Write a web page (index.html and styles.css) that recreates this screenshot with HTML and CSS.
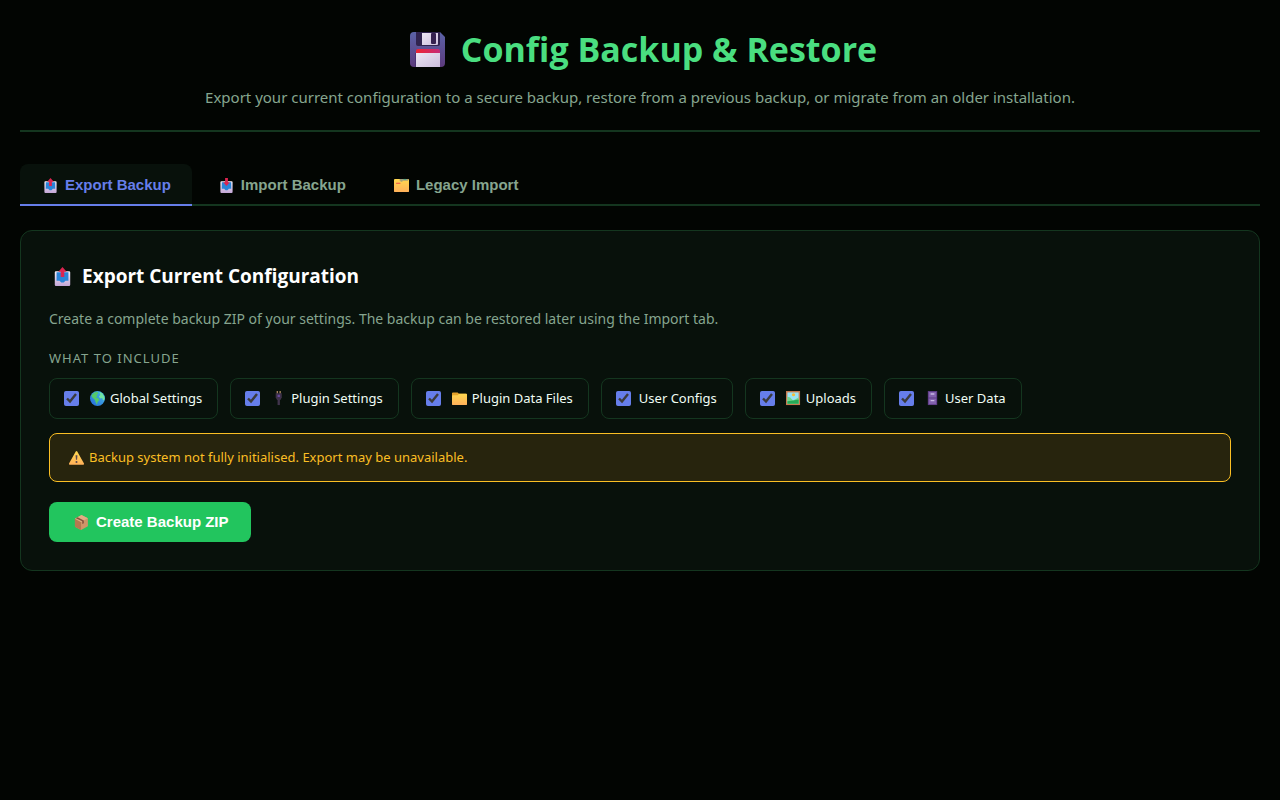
FILE: index.html
```html
<!DOCTYPE html>
<html lang="en">
<head>
  <meta charset="UTF-8">
  <meta name="viewport" content="width=device-width, initial-scale=1.0">
  <title>Config Backup &amp; Restore</title>
  <link rel="stylesheet" href="styles.css">
</head>
<body>
  <!-- Shared icons -->
  <svg class="sprite" aria-hidden="true">
    <defs>
      <linearGradient id="trayFill" x1="0" y1="0" x2="0" y2="1">
        <stop offset="0" stop-color="#f3eef8"/>
        <stop offset="1" stop-color="#c3a6d6"/>
      </linearGradient>
      <linearGradient id="floppyFill" x1="0" y1="0" x2="0" y2="1">
        <stop offset="0" stop-color="#5b63a8"/>
        <stop offset="1" stop-color="#5c3a7c"/>
      </linearGradient>
      <linearGradient id="floppyRed" x1="0" y1="0" x2="1" y2="0">
        <stop offset="0" stop-color="#ee2433"/>
        <stop offset="1" stop-color="#c52a78"/>
      </linearGradient>
      <linearGradient id="paperFill" x1="0" y1="0" x2="1" y2="1">
        <stop offset="0" stop-color="#ece6f3"/>
        <stop offset="1" stop-color="#cdbedd"/>
      </linearGradient>
      <linearGradient id="folderFill" x1="0" y1="0" x2="0" y2="1">
        <stop offset="0" stop-color="#ffd84f"/>
        <stop offset="1" stop-color="#ffb05a"/>
      </linearGradient>
      <linearGradient id="globeFill" x1="1" y1="0" x2="0" y2="1">
        <stop offset="0" stop-color="#48c0e8"/>
        <stop offset="1" stop-color="#2466d8"/>
      </linearGradient>
    </defs>
    <symbol id="tray" viewBox="0 0 16 16">
      <path d="M1.500 4.500a1 1 0 0 1 1-1h11a1 1 0 0 1 1 1V15a1 1 0 0 1-1 1h-11a1 1 0 0 1-1-1z" fill="url(#trayFill)"/>
      <path d="M3 4.500h10v7h-2.500l-1.500 1.500H7l-1.500-1.500H3z" fill="#2a84d8"/>
    </symbol>
    <symbol id="outbox" viewBox="0 0 16 16">
      <use href="#tray"/>
      <path d="M8 0l3.500 4H9.500v4.500h-3V4h-2z" fill="#dc2450"/>
    </symbol>
    <symbol id="inbox" viewBox="0 0 16 16">
      <use href="#tray"/>
      <path d="M6.500 0h3v4.500h2L8 8.500l-3.500-4h2z" fill="#dc2450"/>
    </symbol>
  </svg>

  <main class="container">
    <header class="page-header">
      <h1>
        <svg class="icon-xl" viewBox="0 0 35 35" aria-hidden="true">
          <path d="M4 0h26l5 5v26a4 4 0 0 1-4 4H4a4 4 0 0 1-4-4V4a4 4 0 0 1 4-4z" fill="url(#floppyFill)"/>
          <path d="M6 0h24v12a2 2 0 0 1-2 2H8a2 2 0 0 1-2-2z" fill="#30234f"/>
          <path d="M12 1h16v11a1 1 0 0 1-1 1H12z" fill="url(#paperFill)"/>
          <rect x="21" y="1" width="5" height="11" rx="1" fill="#35204f"/>
          <path d="M5 21h25v14H5z" fill="#4b3274"/>
          <path d="M6 21h24v14H6z" fill="url(#paperFill)"/>
          <path d="M6 21v-2a2 2 0 0 1 2-2h20a2 2 0 0 1 2 2v2z" fill="url(#floppyRed)"/>
        </svg>
        <span>Config Backup &amp; Restore</span>
      </h1>
      <p>Export your current configuration to a secure backup, restore from a previous backup, or migrate from an older installation.</p>
    </header>

    <div class="tabs" role="tablist">
      <button class="tab active" role="tab" aria-selected="true">
        <svg class="icon" aria-hidden="true"><use href="#outbox"/></svg>Export Backup
      </button>
      <button class="tab" role="tab" aria-selected="false">
        <svg class="icon" aria-hidden="true"><use href="#inbox"/></svg>Import Backup
      </button>
      <button class="tab" role="tab" aria-selected="false">
        <svg class="icon" viewBox="0 0 16 16" aria-hidden="true">
          <path d="M0 2a1 1 0 0 1 1-1h14a1 1 0 0 1 1 1v12a1 1 0 0 1-1 1H1a1 1 0 0 1-1-1z" fill="url(#folderFill)"/>
          <path d="M6 1h9v2H9v1H7V3H6z" fill="#a5a07a"/>
          <path d="M10 1h3v1h-3z" fill="#4fa98a"/>
          <rect x="2" y="5" width="5" height="1" rx="0.5" fill="#ee4b4b"/>
        </svg>Legacy Import
      </button>
    </div>

    <section class="card">
      <h2><svg class="icon-lg" aria-hidden="true"><use href="#outbox"/></svg>Export Current Configuration</h2>
      <p class="card-text">Create a complete backup ZIP of your settings. The backup can be restored later using the Import tab.</p>

      <fieldset>
        <legend>What to include</legend>
        <div class="options">
          <label class="option">
            <input type="checkbox" checked>
            <span>
              <svg class="icon" viewBox="0 0 16 16" aria-hidden="true">
                <circle cx="8" cy="8" r="8" fill="url(#globeFill)"/>
                <path d="M2.500 3.500Q5 .5 8 .8l1 2.200-2 1 1 1.500-2 1.500 2.500.5 1.500 2-2 2.500L7.500 15 6 12l-1-3-2.500-2L1.500 5z" fill="#54c96a"/>
                <path d="M10 1l3 1.500L15.300 6l.2 3-1.500 1-1-2.500-2 .5-1.500-2L11 4z" fill="#6fe6a0"/>
              </svg>Global Settings
            </span>
          </label>
          <label class="option">
            <input type="checkbox" checked>
            <span>
              <svg class="icon" viewBox="0 0 16 16" aria-hidden="true">
                <path d="M6 0h1.500v3H6zM9 0h1.500v3H9z" fill="#a5835e"/>
                <path d="M5 2.500h6.500V7L10 9.500H6.500L5 7z" fill="#3d3149"/>
                <path d="M7 4h2.500v2.500H7z" fill="#67499a"/>
                <path d="M7 9h2.500v6H7z" fill="#40344c"/>
              </svg>Plugin Settings
            </span>
          </label>
          <label class="option">
            <input type="checkbox" checked>
            <span>
              <svg class="icon" viewBox="0 0 16 16" aria-hidden="true">
                <path d="M0 2.500a1 1 0 0 1 1-1h5l1.500 1.500H15a1 1 0 0 1 1 1V9H0z" fill="#e5a32b"/>
                <path d="M0 5.500a1 1 0 0 1 1-1h5L7.500 3H15a1 1 0 0 1 1 1v10a1 1 0 0 1-1 1H1a1 1 0 0 1-1-1z" fill="url(#folderFill)"/>
              </svg>Plugin Data Files
            </span>
          </label>
          <label class="option">
            <input type="checkbox" checked>
            <span>User Configs</span>
          </label>
          <label class="option">
            <input type="checkbox" checked>
            <span>
              <svg class="icon" viewBox="0 0 16 16" aria-hidden="true">
                <path d="M0 0h15v15H0z" fill="#c77b50"/>
                <path d="M1.500 1.500h12v12h-12z" fill="#9be3f3"/>
                <circle cx="8" cy="4" r="1.700" fill="#f8bd36"/>
                <path d="M1.500 6l3 1 3 3 6-3v6.500h-12z" fill="#72d68a"/>
                <path d="M1.500 11l6-1 6-1v4.500h-12z" fill="#27a956"/>
              </svg>Uploads
            </span>
          </label>
          <label class="option">
            <input type="checkbox" checked>
            <span>
              <svg class="icon" viewBox="0 0 16 16" aria-hidden="true">
                <path d="M3 0h10v15H3z" fill="#5c3a85"/>
                <path d="M4 1h8v6H4zM4 8h8v6H4z" fill="#8261ad"/>
                <path d="M6 2.500h4V4H6zM6 9.500h4V11H6z" fill="#c9b8e4"/>
              </svg>User Data
            </span>
          </label>
        </div>
      </fieldset>

      <div class="alert" role="alert">
        <svg class="icon" viewBox="0 0 16 16" aria-hidden="true">
          <path d="M7.200 1.500a1 1 0 0 1 1.600 0l7.200 13a.8.8 0 0 1-.7 1.200H.7a.8.8 0 0 1-.7-1.200z" fill="url(#folderFill)"/>
          <path d="M7 5.500h2l-.4 5H7.400z" fill="#584650"/>
          <circle cx="8" cy="12.700" r="1.100" fill="#584650"/>
        </svg>Backup system not fully initialised. Export may be unavailable.
      </div>

      <button class="btn">
        <svg class="icon" viewBox="0 0 16 16" aria-hidden="true">
          <path d="M8 0l6.800 3.500v8.500L7.500 16 1 12.500V4z" fill="#d09468"/>
          <path d="M1 4l6.500 3.500V16L1 12.500z" fill="#b5794f"/>
          <path d="M8 0l6.800 3.500L7.500 7.500 1 4z" fill="#e0ad84"/>
          <path d="M3.800 2.500l6.700 3.300v3l-1.700.8V6.600L2 3.400z" fill="#85513c"/>
        </svg>Create Backup ZIP
      </button>
    </section>
  </main>

  <script>
    const tabs = document.querySelectorAll('.tab');

    tabs.forEach(tab => tab.addEventListener('click', () => {
      tabs.forEach(t => {
        t.classList.toggle('active', t === tab);
        t.setAttribute('aria-selected', t === tab);
      });
    }));
  </script>
</body>
</html>
```
FILE: styles.css
```css
* {
  box-sizing: border-box;
}
body {
  margin: 0;
  color-scheme: dark;
  background: #020502;
  color: #f0fdf4;
  font-family: 'Segoe UI', 'Noto Sans', sans-serif;
  font-size: 15px;
  line-height: 24px;
}
.sprite {
  position: absolute;
  width: 0;
  height: 0;
}
.container {
  padding: 20px;
}
.page-header {
  text-align: center;
  padding-bottom: 21px;
  border-bottom: 2px solid #14361f;
  margin-bottom: 32px;
}
h1,
h2 {
  display: flex;
  align-items: center;
  font-family: 'Segoe UI', 'Open Sans', sans-serif;
}
h1 {
  justify-content: center;
  gap: 16px;
  margin: 0 0 7px;
  color: #4ade80;
  font-size: 34px;
  line-height: 58px;
}
.page-header p {
  margin: 0;
  color: #86a58f;
}
.icon {
  flex: none;
  width: 15px;
  height: 15px;
  margin: 0 5px 0 3px;
}
.icon-lg {
  width: 19px;
  height: 19px;
  margin: 0 10px 0 4px;
}
.icon-xl {
  width: 35px;
  height: 35px;
  margin-left: 7px;
}

/* Tabs */
.tabs {
  display: flex;
  gap: 4px;
  border-bottom: 2px solid #14361f;
  margin-bottom: 24px;
}
.tab {
  display: flex;
  align-items: center;
  padding: 11px 21px 9px 20px;
  margin-bottom: -2px;
  background: none;
  border: none;
  border-bottom: 2px solid transparent;
  border-radius: 8px 8px 0 0;
  color: #86a58f;
  font: bold 15px/20px Arial, 'Liberation Sans', sans-serif;
  cursor: pointer;
}
.tab .icon,
.btn .icon {
  margin-right: 7px;
}
.tab:hover {
  color: #f0fdf4;
}
.tab.active {
  background: #08110b;
  border-bottom-color: #667eea;
  color: #667eea;
}

/* Export panel */
.card {
  background: #08110b;
  border: 1px solid #14361f;
  border-radius: 12px;
  padding: 28px;
}
h2 {
  margin: 0 0 14px;
  color: #fff;
  font-size: 19px;
  line-height: 34px;
}
.card-text {
  margin: 0 0 16px;
  color: #86a58f;
  font-size: 14px;
}
fieldset {
  margin: 0 0 14px;
  padding: 0;
  border: none;
}
legend {
  padding: 0;
  margin-bottom: 9px;
  color: #86a58f;
  font-size: 13px;
  line-height: 22px;
  text-transform: uppercase;
  letter-spacing: 1px;
}
.options {
  display: flex;
  flex-wrap: wrap;
  gap: 12px;
}
.option {
  display: flex;
  align-items: center;
  gap: 8px;
  padding: 8px 15px 8px 14px;
  border: 1px solid #14361f;
  border-radius: 8px;
  font-size: 13px;
  line-height: 23px;
  cursor: pointer;
}
.option span {
  display: flex;
  align-items: center;
}
.option input {
  width: 15px;
  height: 15px;
  margin: 0;
  accent-color: #667eea;
}
.alert {
  display: flex;
  align-items: center;
  padding: 12px 16px;
  margin-bottom: 20px;
  background: #27240d;
  border: 1px solid #fbbf24;
  border-radius: 8px;
  color: #fbbf24;
  font-size: 13px;
  line-height: 23px;
}
.btn {
  display: flex;
  align-items: center;
  padding: 10px 22px;
  background: #22c55e;
  border: none;
  border-radius: 8px;
  color: #fff;
  font: bold 15px/20px Arial, 'Liberation Sans', sans-serif;
  cursor: pointer;
}
.btn:hover {
  background: #16a34a;
}
```
